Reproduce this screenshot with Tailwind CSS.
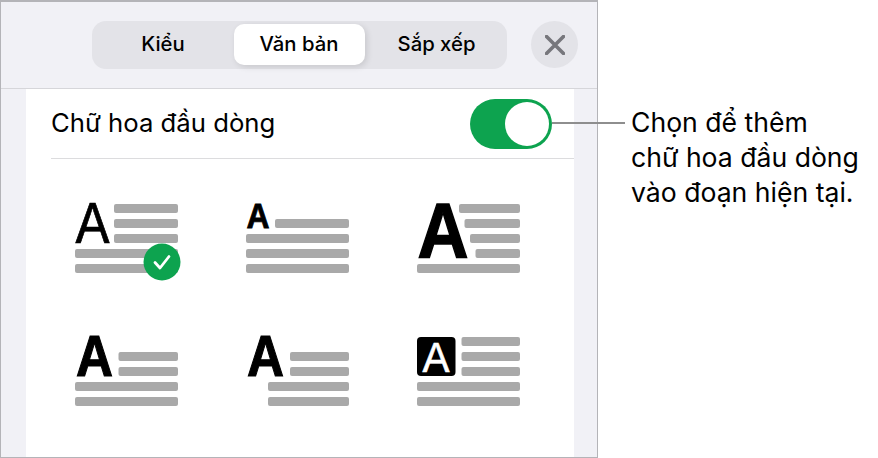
<!DOCTYPE html>
<html lang="vi">

<head>
    <meta charset="UTF-8">
    <script src="https://cdn.jsdelivr.net/npm/@tailwindcss/browser@4"></script>
    <title>Chữ hoa đầu dòng</title>
</head>

<body class="bg-white font-['Inter',sans-serif] text-black">

    <div class="relative flex w-[878px] h-[458px] overflow-hidden">

        <!-- panel -->
        <div class="flex flex-col w-[598px] h-[458px] bg-[#f1f1f6] border border-t-2 border-[#b4b4b8]">
            <div class="flex items-center h-[87px] shrink-0 border-b border-[#d6d6da] pb-[1px]">
                <div class="flex ml-[91px] w-[415px] h-[48px] p-[3.5px] rounded-[14px] bg-[#e3e3e8] text-[20.3px] font-medium">
                    <div class="flex w-[138px] items-center justify-center pr-[3px]">Kiểu</div>
                    <div class="flex w-[131px] items-center justify-center rounded-[10px] bg-white shadow-[2px_2px_6px_rgba(0,0,0,0.12)]">Văn bản</div>
                    <div class="flex flex-1 items-center justify-center pl-[5px]">Sắp xếp</div>
                </div>
                <div class="flex items-center justify-center ml-[24px] w-[47px] h-[47px] rounded-full bg-[#e3e3e8]">
                    <svg width="20" height="20" viewBox="0 0 20 20" fill="none" stroke="#77777c" stroke-width="3.6" stroke-linecap="round">
                        <path d="M1.500 1.500 18.500 18.500M18.500 1.500 1.500 18.500" />
                    </svg>
                </div>
            </div>

            <div class="flex-1 ml-[25px] mr-[23px] pl-[25px] bg-white">
                <div class="flex items-center justify-between h-[70px] border-b border-[#dcdcde] pr-[22px]">
                    <span class="text-[25.7px]">Chữ hoa đầu dòng</span>
                    <div class="flex justify-end items-center w-[82px] h-[50px] p-[3px] rounded-full bg-[#0da34f]">
                        <div class="w-[44px] h-[44px] rounded-full bg-white"></div>
                    </div>
                </div>

                <div class="grid grid-cols-[171px_171px_103px] grid-rows-[133px_70px] mt-[45px] ml-[24px] font-['Liberation_Sans',sans-serif]">
                    <svg width="103" height="70" viewBox="0 0 103 70" fill="#a9a9a9" class="overflow-visible">
                        <rect x="39" y="0" width="64" height="9" rx="2" />
                        <rect x="39" y="15" width="64" height="9" rx="2" />
                        <rect x="39" y="30" width="64" height="9" rx="2" />
                        <rect x="0" y="45" width="103" height="9" rx="2" />
                        <rect x="0" y="60" width="103" height="9" rx="2" />
                        <text x="0.500" y="39" font-size="58" fill="#000" stroke="#000" stroke-width="0.7" textLength="34" lengthAdjust="spacingAndGlyphs">A</text>
                        <circle cx="87" cy="58" r="18.500" fill="#0da34f" />
                        <path d="M80 58.500 85 64 94 52.500" fill="none" stroke="#fff" stroke-width="2.800" stroke-linecap="round" stroke-linejoin="round" />
                    </svg>
                    <svg width="103" height="70" viewBox="0 0 103 70" fill="#a9a9a9" class="overflow-visible">
                        <rect x="29" y="15" width="74" height="9" rx="2" />
                        <rect x="0" y="30" width="103" height="9" rx="2" />
                        <rect x="0" y="45" width="103" height="9" rx="2" />
                        <rect x="0" y="60" width="103" height="9" rx="2" />
                        <text x="0.500" y="24" font-size="35" font-weight="700" fill="#000" stroke="#000" stroke-width="0.8" textLength="23" lengthAdjust="spacingAndGlyphs">A</text>
                    </svg>
                    <svg width="103" height="70" viewBox="0 0 103 70" fill="#a9a9a9" class="overflow-visible">
                        <rect x="42" y="0" width="61" height="9" rx="2" />
                        <rect x="47.500" y="15" width="55.500" height="9" rx="2" />
                        <rect x="53" y="30" width="50" height="9" rx="2" />
                        <rect x="58.500" y="45" width="44.500" height="9" rx="2" />
                        <rect x="0" y="60" width="103" height="9" rx="2" />
                        <text x="0.500" y="54" font-size="78" font-weight="700" fill="#000" stroke="#000" stroke-width="1.5" textLength="51" lengthAdjust="spacingAndGlyphs">A</text>
                    </svg>
                    <svg width="103" height="70" viewBox="0 0 103 70" fill="#a9a9a9" class="overflow-visible">
                        <rect x="43.500" y="15" width="59.500" height="9" rx="2" />
                        <rect x="43.500" y="30" width="59.500" height="9" rx="2" />
                        <rect x="0" y="45" width="103" height="9" rx="2" />
                        <rect x="0" y="60" width="103" height="9" rx="2" />
                        <text x="1" y="39" font-size="57" font-weight="700" fill="#000" stroke="#000" stroke-width="1.1" textLength="37" lengthAdjust="spacingAndGlyphs">A</text>
                    </svg>
                    <svg width="103" height="70" viewBox="0 0 103 70" fill="#a9a9a9" class="overflow-visible">
                        <rect x="44" y="15" width="59" height="9" rx="2" />
                        <rect x="44" y="30" width="59" height="9" rx="2" />
                        <rect x="22" y="45" width="81" height="9" rx="2" />
                        <rect x="22" y="60" width="81" height="9" rx="2" />
                        <text x="1" y="39" font-size="57" font-weight="700" fill="#000" stroke="#000" stroke-width="1.1" textLength="37" lengthAdjust="spacingAndGlyphs">A</text>
                    </svg>
                    <svg width="103" height="70" viewBox="0 0 103 70" fill="#a9a9a9" class="overflow-visible">
                        <rect x="44.500" y="0" width="58.500" height="9" rx="2" />
                        <rect x="44.500" y="15" width="58.500" height="9" rx="2" />
                        <rect x="44.500" y="30" width="58.500" height="9" rx="2" />
                        <rect x="0" y="45" width="103" height="9" rx="2" />
                        <rect x="0" y="60" width="103" height="9" rx="2" />
                        <rect x="0" y="0" width="38.500" height="39" rx="4" fill="#000" />
                        <text x="5.500" y="34.500" font-size="42" fill="#fff" stroke="#fff" stroke-width="0.6" textLength="27" lengthAdjust="spacingAndGlyphs">A</text>
                    </svg>
                </div>
            </div>
        </div>

        <!-- callout -->
        <div class="ml-[33px] mt-[105px] text-[26.6px] leading-[35px]">
            Chọn để thêm<br>chữ hoa đầu dòng<br>vào đoạn hiện tại.
        </div>

        <!-- leader line from the switch to the callout -->
        <div class="absolute left-[552px] top-[122px] w-[73px] h-[2px] bg-[#8e8e8e]"></div>
    </div>

</body>

</html>
